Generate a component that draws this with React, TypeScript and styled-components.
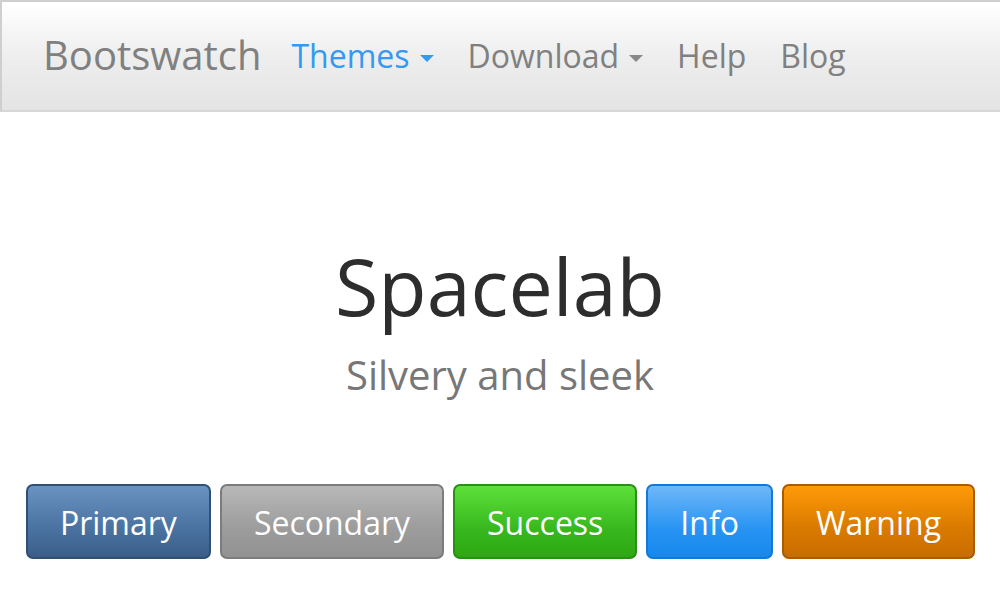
import React from "react";
import styled, { createGlobalStyle } from "styled-components";

const Global = createGlobalStyle`
  html, body { margin: 0; padding: 0; background: #fff; }
  body { font-family: "Open Sans", "Liberation Sans", sans-serif; color: #2d2d2d; }
  * { box-sizing: border-box; }
`;

const Navbar = styled.nav`
  height: 112px;
  display: flex;
  align-items: center;
  padding-left: 41px;
  border-top: 2px solid #cfcfcf;
  border-left: 2px solid #cfcfcf;
  border-bottom: 2px solid #d6d6d6;
  background: linear-gradient(#ffffff, #eeeeee 50%, #e4e4e4);
`;

const Brand = styled.a`
  font-size: 40px;
  line-height: 1;
  color: #808080;
  margin-right: 13px;
  padding-bottom: 2px;
  text-decoration: none;
`;

const NavList = styled.ul`
  display: flex;
  align-items: center;
  list-style: none;
  margin: 0;
  padding: 0;
`;

const NavLink = styled.a<{ $active?: boolean }>`
  display: flex;
  align-items: center;
  padding: 0 17px;
  font-size: 32px;
  line-height: 1;
  color: ${(p) => (p.$active ? "#3399f3" : "#808080")};
  text-decoration: none;
`;

const Caret = styled.span<{ $active?: boolean }>`
  display: inline-block;
  margin-left: 10px;
  margin-top: 5px;
  width: 0;
  height: 0;
  border-left: 7px solid transparent;
  border-right: 7px solid transparent;
  border-top: 7px solid ${(p) => (p.$active ? "#3399f3" : "#888")};
`;

const Hero = styled.header`
  display: flex;
  flex-direction: column;
  align-items: center;
  padding-top: 134px;
`;

const Title = styled.h1`
  margin: 0;
  font-size: 79px;
  font-weight: 400;
  line-height: 1;
  color: #2d2d2d;
`;

const Subtitle = styled.p`
  margin: 26px 0 0;
  font-size: 40px;
  line-height: 1.2;
  color: #777;
`;

const ButtonRow = styled.div`
  display: flex;
  justify-content: center;
  gap: 9px;
  margin-top: 85px;
  padding-left: 1px;
`;

type Variant = { top: string; mid: string; bottom: string; border: string };

const variants: Record<string, Variant> = {
  primary: { top: "#6a93c1", mid: "#4a72a0", bottom: "#3b5e88", border: "#2f4f75" },
  secondary: { top: "#b8b8b8", mid: "#9c9c9c", bottom: "#929292", border: "#7c7c7c" },
  success: { top: "#5ee03a", mid: "#38b81e", bottom: "#2ea812", border: "#2a8f15" },
  info: { top: "#6fb7f8", mid: "#2894f3", bottom: "#1688ee", border: "#0f7ad8" },
  warning: { top: "#ff9a08", mid: "#d97a00", bottom: "#c86c00", border: "#a85b00" },
};

const Button = styled.button<{ $v: Variant }>`
  font-family: "Open Sans", "Liberation Sans", sans-serif;
  font-size: 32px;
  line-height: 1.5;
  height: 75px;
  padding: 3px 32px 0;
  color: #fff;
  border-radius: 7px;
  border: 2px solid ${(p) => p.$v.border};
  background: linear-gradient(${(p) => p.$v.top}, ${(p) => p.$v.mid} 60%, ${(p) => p.$v.bottom});
  text-shadow: 0 1px 0 rgba(0, 0, 0, 0.05);
  cursor: pointer;
`;

export default function App() {
  return (
    <>
      <Global />
      <Navbar>
        <Brand href="#">Bootswatch</Brand>
        <NavList>
          <li>
            <NavLink href="#" $active>
              Themes
              <Caret $active />
            </NavLink>
          </li>
          <li>
            <NavLink href="#">
              Download
              <Caret />
            </NavLink>
          </li>
          <li>
            <NavLink href="#">Help</NavLink>
          </li>
          <li>
            <NavLink href="#">Blog</NavLink>
          </li>
        </NavList>
      </Navbar>
      <Hero>
        <Title>Spacelab</Title>
        <Subtitle>Silvery and sleek</Subtitle>
      </Hero>
      <ButtonRow>
        <Button $v={variants.primary}>Primary</Button>
        <Button $v={variants.secondary}>Secondary</Button>
        <Button $v={variants.success}>Success</Button>
        <Button $v={variants.info}>Info</Button>
        <Button $v={variants.warning}>Warning</Button>
      </ButtonRow>
    </>
  );
}
